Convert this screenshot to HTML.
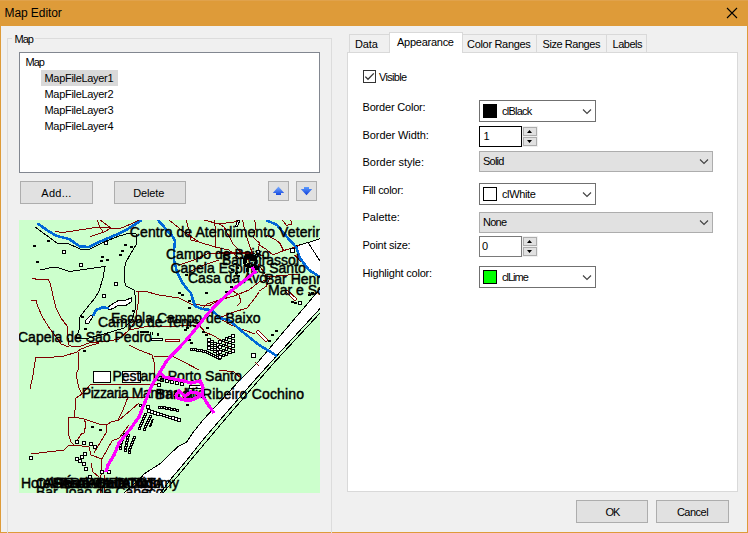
<!DOCTYPE html>
<html><head><meta charset="utf-8"><title>Map Editor</title>
<style>
*{box-sizing:border-box;margin:0;padding:0}
html,body{width:748px;height:533px;overflow:hidden;background:#f0f0f0}
body{position:relative;font-family:"Liberation Sans",sans-serif;font-size:11px;color:#000}
.abs{position:absolute}
#win{position:absolute;left:0;top:0;width:748px;height:533px;background:#f0f0f0;border:1px solid #de9b39;border-top:0}
#title{position:absolute;left:0;top:0;width:748px;height:26px;background:#de9b39}
#title span{position:absolute;left:4.5px;top:6px;font-size:12px;line-height:15px;letter-spacing:-0.08px}
.t{position:absolute;white-space:nowrap;line-height:13px}
.btn{position:absolute;background:#e1e1e1;border:1px solid #adadad;text-align:center;line-height:21px;padding-top:1px}
.grp{position:absolute;border:1px solid #dcdcdc}
.box{position:absolute;background:#fff;border:1px solid #7a7a7a}
.cmb{position:absolute;background:#e1e1e1;border:1px solid #adadad}
.tab{position:absolute;background:#f0f0f0;border:1px solid #d9d9d9;border-bottom:0;text-align:center;line-height:17px;padding-top:1px;white-space:nowrap}
.spin{position:absolute;width:16px;height:21px;background:#f0f0f0}
.spin i{position:absolute;left:1px;width:14px;height:9px;background:#e1e1e1;border:1px solid #adadad}
</style></head><body>
<div id="win"></div>
<div id="title"><div class="abs" style="left:0;top:0;width:748px;height:1px;background:#e0a24c"></div><span>Map Editor</span>
<svg class="abs" style="left:726px;top:7px" width="12" height="12" viewBox="0 0 12 12"><path d="M1 1 L11 11 M11 1 L1 11" stroke="#000" stroke-width="1.1" fill="none"/></svg>
</div>

<!-- left group -->
<div class="grp" style="left:7px;top:38px;width:325px;height:500px"></div>
<div class="t" style="left:12px;top:33px;background:#f0f0f0;padding:0 2px 0 2.5px;letter-spacing:-1px">Map</div>
<div class="box" style="left:19px;top:52px;width:301px;height:121px;border-color:#828790"></div>
<div class="t" style="left:25.5px;top:56px;letter-spacing:-1px">Map</div>
<div class="abs" style="left:41px;top:70px;width:77px;height:16px;background:#d9d9d9"></div>
<div class="t" style="left:44.5px;top:72px;letter-spacing:-.31px">MapFileLayer1</div>
<div class="t" style="left:44.5px;top:88px;letter-spacing:-.31px">MapFileLayer2</div>
<div class="t" style="left:44.5px;top:104px;letter-spacing:-.31px">MapFileLayer3</div>
<div class="t" style="left:44.5px;top:120px;letter-spacing:-.31px">MapFileLayer4</div>
<div class="btn" style="left:20px;top:181px;width:73px;height:23px;letter-spacing:.27px">Add...</div>
<div class="btn" style="left:114px;top:181px;width:72px;height:23px;letter-spacing:-.16px;padding-right:2.5px">Delete</div>
<div class="btn" style="left:268px;top:181px;width:21px;height:20px"></div>
<svg class="abs" style="left:268px;top:181px" width="21" height="20" viewBox="0 0 21 20"><defs><linearGradient id="gu" x1="0" y1="0" x2="0" y2="1"><stop offset="0" stop-color="#7db0ff"/><stop offset="1" stop-color="#1246e0"/></linearGradient></defs><path d="M10.5 5.5 L16.2 12 L13 12 L13 14 L8 14 L8 12 L4.8 12 Z" fill="url(#gu)"/></svg>
<div class="btn" style="left:296px;top:181px;width:21px;height:20px"></div>
<svg class="abs" style="left:296px;top:181px" width="21" height="20" viewBox="0 0 21 20"><defs><linearGradient id="gd" x1="0" y1="0" x2="0" y2="1"><stop offset="0" stop-color="#5c9cff"/><stop offset="1" stop-color="#0c3ad8"/></linearGradient></defs><path d="M8 6 L13 6 L13 8 L16.2 8 L10.5 14.3 L4.8 8 L8 8 Z" fill="url(#gd)"/></svg>
<div id="map" class="abs" style="left:19px;top:220px;width:301px;height:273px;background:#ccffcc;overflow:hidden"><svg id="mapsvg" width="301" height="273" viewBox="0 0 301 273" style="position:absolute;left:0;top:0">
<rect width="301" height="273" fill="#ccffcc"/>
<g shape-rendering="crispEdges">
<polygon points="278,25.7 292,21.7 301,18.7 301,88.6 252,142 235.8,160 201,200 184,219.7 167.3,240.8 151.8,259 143.3,270.3 141,273 105,273 120.8,259 125,254 141.2,243.6 158.8,226.7 168,221.8 172.9,214 184,200 221,160 239,142 294.6,76.4 301,69 301,57 290,50 281,38" fill="#fff" stroke="#000" stroke-width="1"/>
<polyline points="301,93 255.7,142 240,160 205.5,200 172.9,238.7 157.4,257.7 146.2,270.3 144,273" stroke="#000" stroke-width="1" fill="none" />
<polyline points="36,11.5 44,12.5 70,8.5 80,7 92,8 100,9" stroke="#800000" stroke-width="1" fill="none" />
<polyline points="78,0 81,7 84,12" stroke="#800000" stroke-width="1" fill="none" />
<polyline points="81,0 92,8" stroke="#800000" stroke-width="1" fill="none" />
<polyline points="71,16.5 84,12.5 92,8" stroke="#800000" stroke-width="1" fill="none" />
<polyline points="13,58.5 20,59.5 29,59 31,63 33,71 35,80 37,88 42,98 48,106 49,118 50,125 54,127 62,126 70,123 80,122 90,121 100,119 110,110 125,107 160,106 180,105" stroke="#800000" stroke-width="1" fill="none" />
<polyline points="12,80 17,80.5 19,87 24,98 31,109 38,118 42,124 50,127" stroke="#800000" stroke-width="1" fill="none" />
<polyline points="16,142 16,137 30,137.5 45,136 58,132 62,129 70,126 80,123" stroke="#800000" stroke-width="1" fill="none" />
<polyline points="16,142 14,155 11,169" stroke="#800000" stroke-width="1" fill="none" />
<polyline points="59,132 60,147 57,155 60,168 63,174 57,178 56,190 55,197 49,197 49,213 52,222 55,225" stroke="#800000" stroke-width="1" fill="none" />
<polyline points="55,197 65,199 80,204 88,205 92,202 100,200 112,190 120,183" stroke="#800000" stroke-width="1" fill="none" />
<polyline points="63,174 72,164 100,164 140,164" stroke="#800000" stroke-width="1" fill="none" />
<polyline points="65,199 67,204 65,213 63,213 57,222" stroke="#800000" stroke-width="1" fill="none" />
<polyline points="88,205 87,213 75,233" stroke="#800000" stroke-width="1" fill="none" />
<polyline points="12,233 20,233 45,230 50,225 55,225 70,227 72,235 83,239 88,230 93,221 100,218 110,205" stroke="#800000" stroke-width="1" fill="none" />
<polyline points="83,239 82,255 81,273" stroke="#800000" stroke-width="1" fill="none" />
<polyline points="72,243 74,252 80,257" stroke="#800000" stroke-width="1" fill="none" />
<polyline points="85,273 86,255" stroke="#800000" stroke-width="1" fill="none" />
<polyline points="110,125 120,130 133,135 135,142 135,160" stroke="#800000" stroke-width="1" fill="none" />
<polyline points="135,136 155,137 165,142 180,150" stroke="#800000" stroke-width="1" fill="none" />
<polyline points="119,71 120,78 118,90 117,100 110,110" stroke="#800000" stroke-width="1" fill="none" />
<polyline points="99,177 131,177" stroke="#800000" stroke-width="1" fill="none" />
<polyline points="109,177 104,190 99,200" stroke="#800000" stroke-width="1" fill="none" />
<polyline points="200,4 204.7,6.7 206.7,8.8" stroke="#800000" stroke-width="1" fill="none" />
<polyline points="223.6,0 225,6.7 227.7,17.5 231,27 233.8,33.8" stroke="#800000" stroke-width="1" fill="none" />
<polyline points="235.8,0 236.5,8 234.4,17.5 240.5,23 239,31" stroke="#800000" stroke-width="1" fill="none" />
<polyline points="247,15 256.7,20 260.8,23 264.8,31" stroke="#800000" stroke-width="1" fill="none" />
<polyline points="239,24.3 246,28.4 254,35 263.5,31 271.6,28.4 281,25" stroke="#800000" stroke-width="1" fill="none" />
<polyline points="263.5,0 267.5,5.4 273,4 271.5,0" stroke="#800000" stroke-width="1" fill="none" />
<polyline points="200,32.4 217,32.4 234,32.4" stroke="#800000" stroke-width="1" fill="none" />
<polyline points="275.6,35 281,40.5 286.4,44.6" stroke="#800000" stroke-width="1" fill="none" />
<polyline points="247.3,56.7 264.8,55.4 281,54" stroke="#800000" stroke-width="1" fill="none" />
<polyline points="251.3,56.7 247.3,66.2 240.5,71" stroke="#800000" stroke-width="1" fill="none" />
<polyline points="239,44.6 244.6,51.3 247.3,56.7" stroke="#800000" stroke-width="1" fill="none" />
<polyline points="205,8 210,16 214,24 222,32.4" stroke="#800000" stroke-width="1" fill="none" />
<polyline points="100,9 112,4 120,0" stroke="#800000" stroke-width="1" fill="none" />
<polyline points="150,0 165,12 180,22 196,27 210,30 220,38 230,40" stroke="#800000" stroke-width="1" fill="none" />
<polyline points="167,0 170,10 172,20 180,22" stroke="#800000" stroke-width="1" fill="none" />
<polyline points="195,0 197,12 196,27" stroke="#800000" stroke-width="1" fill="none" />
<polyline points="185,0 200,4 215,2 220,0" stroke="#800000" stroke-width="1" fill="none" />
<polyline points="160,45 175,40 190,33 205,33 232,33 245,36" stroke="#800000" stroke-width="1" fill="none" />
<polyline points="170,52 185,45 200,40" stroke="#800000" stroke-width="1" fill="none" />
<polyline points="117,71.5 125,71 140,75 160,78 172,84 190,86" stroke="#800000" stroke-width="1" fill="none" />
<polyline points="190,86 200,80 215,76 230,70 240,62 248,60" stroke="#800000" stroke-width="1" fill="none" />
<polyline points="200,98 215,92 228,88 236,78 240,72" stroke="#800000" stroke-width="1" fill="none" />
<polyline points="214,71 220,75 222,82 218,86" stroke="#800000" stroke-width="1" fill="none" />
<polyline points="200,98 212,105 225,110 236,114" stroke="#800000" stroke-width="1" fill="none" />
<polyline points="180,105 186,112 195,116 205,122 212,130" stroke="#800000" stroke-width="1" fill="none" />
<polyline points="183,89 188,84 200,80" stroke="#800000" stroke-width="1" fill="none" />
<polyline points="200,150 215,152 222,158" stroke="#800000" stroke-width="1" fill="none" />
<polyline points="236,142 240,146" stroke="#800000" stroke-width="1" fill="none" />
<polyline points="16,7 38,23 49,23.5 61,29 71,29 85,22 100,16 111,13 117,14 117,25 112,33 107,42 105,50 105,60 107,66 115,70 116,75" stroke="#000" stroke-width="1" fill="none" />
<polyline points="21,50 35,47 39,47.5 50,51.5 86,46.5 84,58 80,71 76,78 67,89 61,97 60,110 57,118 58,119 70,118 82,115 95,111 105,108 113,100 116,90 116,75" stroke="#000" stroke-width="1" fill="none" />
<rect x="13.5" y="24.5" width="3" height="2" fill="#000"/><rect x="27.5" y="19.5" width="3" height="2" fill="#000"/><rect x="16.5" y="40.5" width="3" height="2" fill="#000"/><rect x="81.5" y="36" width="3" height="2" fill="#000"/><rect x="80.5" y="40" width="3" height="2" fill="#000"/><rect x="86.5" y="38.5" width="3" height="2" fill="#000"/><rect x="104.5" y="24" width="3" height="2" fill="#000"/><rect x="110.5" y="26" width="3" height="2" fill="#000"/><rect x="101.5" y="30" width="3" height="2" fill="#000"/><rect x="99.5" y="34" width="3" height="2" fill="#000"/><rect x="165.5" y="54" width="3" height="2" fill="#000"/><rect x="62" y="95.5" width="3" height="2" fill="#000"/><rect x="64.5" y="107.5" width="3" height="2" fill="#000"/><rect x="64" y="129.5" width="3" height="2" fill="#000"/><rect x="112.5" y="89.5" width="3" height="2" fill="#000"/><rect x="158.5" y="72" width="3" height="2" fill="#000"/><rect x="161.5" y="74" width="3" height="2" fill="#000"/><rect x="168.5" y="80" width="3" height="2" fill="#000"/><rect x="168.5" y="87" width="3" height="2" fill="#000"/><rect x="185.5" y="72" width="3" height="2" fill="#000"/><rect x="248.5" y="120" width="3" height="2" fill="#000"/><rect x="251.5" y="114" width="3" height="2" fill="#000"/><rect x="255.5" y="110" width="3" height="2" fill="#000"/><rect x="271.5" y="81" width="3" height="2" fill="#000"/><rect x="274.5" y="82" width="3" height="2" fill="#000"/><rect x="288.5" y="74" width="3" height="2" fill="#000"/><rect x="291.5" y="72" width="3" height="2" fill="#000"/><rect x="164.5" y="109" width="3" height="2" fill="#000"/><rect x="166.5" y="107" width="3" height="2" fill="#000"/><rect x="182.5" y="111" width="3" height="2" fill="#000"/><rect x="186.5" y="107" width="3" height="2" fill="#000"/><rect x="185.5" y="114" width="3" height="2" fill="#000"/><rect x="168.5" y="119" width="3" height="2" fill="#000"/><rect x="170.5" y="122" width="3" height="2" fill="#000"/><rect x="71.5" y="206" width="3" height="2" fill="#000"/><rect x="79.5" y="209" width="3" height="2" fill="#000"/><rect x="178.5" y="165" width="3" height="2" fill="#000"/><rect x="166.5" y="184" width="3" height="2" fill="#000"/><rect x="43.5" y="30" width="3" height="3" fill="#fff" stroke="#000" stroke-width="1"/><rect x="60" y="43" width="3" height="3" fill="#fff" stroke="#000" stroke-width="1"/><rect x="85.5" y="21" width="3" height="3" fill="#fff" stroke="#000" stroke-width="1"/><rect x="95" y="62" width="3" height="3" fill="#fff" stroke="#000" stroke-width="1"/><rect x="83" y="74.5" width="3" height="3" fill="#fff" stroke="#000" stroke-width="1"/><rect x="279" y="81.5" width="3" height="3" fill="#fff" stroke="#000" stroke-width="1"/><polygon points="66,101 67,104 70,103 74,96 72,95" fill="#fff" stroke="#000" stroke-width="1"/><polygon points="88,88 92,85 100,80 107,80 112,78 112,82 106,86 100,85 95,88 90,90" fill="#fff" stroke="#000" stroke-width="1"/><rect x="121" y="111" width="9" height="2" fill="#000"/><rect x="131" y="112" width="1" height="3" fill="#000"/><rect x="133" y="112" width="1" height="3" fill="#000"/><rect x="138" y="113" width="2" height="3" fill="#000"/><rect x="132" y="118" width="11" height="2" fill="#fff" stroke="#000"/><rect x="146" y="119" width="14" height="2" fill="#fff" stroke="#800000"/><rect x="171" y="128" width="2" height="2" fill="#fff" stroke="#000" stroke-width="1"/><rect x="173" y="128.333" width="2" height="2" fill="#fff" stroke="#000" stroke-width="1"/><rect x="175" y="128.667" width="2" height="2" fill="#fff" stroke="#000" stroke-width="1"/><rect x="177" y="129" width="2" height="2" fill="#fff" stroke="#000" stroke-width="1"/><rect x="179" y="129.333" width="2" height="2" fill="#fff" stroke="#000" stroke-width="1"/><rect x="181" y="129.667" width="2" height="2" fill="#fff" stroke="#000" stroke-width="1"/><rect x="183" y="130" width="2" height="2" fill="#fff" stroke="#000" stroke-width="1"/><rect x="185" y="130" width="2" height="2" fill="#fff" stroke="#000" stroke-width="1"/><rect x="187" y="131" width="2" height="2" fill="#fff" stroke="#000" stroke-width="1"/><rect x="189" y="132" width="2" height="2" fill="#fff" stroke="#000" stroke-width="1"/><rect x="191" y="133" width="2" height="2" fill="#fff" stroke="#000" stroke-width="1"/><rect x="193" y="134" width="2" height="2" fill="#fff" stroke="#000" stroke-width="1"/><rect x="195" y="135" width="2" height="2" fill="#fff" stroke="#000" stroke-width="1"/><rect x="197" y="136" width="2" height="2" fill="#fff" stroke="#000" stroke-width="1"/><rect x="199" y="137" width="2" height="2" fill="#fff" stroke="#000" stroke-width="1"/><rect x="188.75" y="118.75" width="2.5" height="2.5" fill="#fff" stroke="#000" stroke-width="1"/><rect x="191.75" y="120.417" width="2.5" height="2.5" fill="#fff" stroke="#000" stroke-width="1"/><rect x="194.75" y="122.083" width="2.5" height="2.5" fill="#fff" stroke="#000" stroke-width="1"/><rect x="197.75" y="123.75" width="2.5" height="2.5" fill="#fff" stroke="#000" stroke-width="1"/><rect x="188.75" y="122.75" width="2.5" height="2.5" fill="#fff" stroke="#000" stroke-width="1"/><rect x="191.75" y="124.417" width="2.5" height="2.5" fill="#fff" stroke="#000" stroke-width="1"/><rect x="194.75" y="126.083" width="2.5" height="2.5" fill="#fff" stroke="#000" stroke-width="1"/><rect x="197.75" y="127.75" width="2.5" height="2.5" fill="#fff" stroke="#000" stroke-width="1"/><rect x="188.75" y="126.75" width="2.5" height="2.5" fill="#fff" stroke="#000" stroke-width="1"/><rect x="191.75" y="128.417" width="2.5" height="2.5" fill="#fff" stroke="#000" stroke-width="1"/><rect x="194.75" y="130.083" width="2.5" height="2.5" fill="#fff" stroke="#000" stroke-width="1"/><rect x="197.75" y="131.75" width="2.5" height="2.5" fill="#fff" stroke="#000" stroke-width="1"/><rect x="199.75" y="120.75" width="2.5" height="2.5" fill="#fff" stroke="#000" stroke-width="1"/><rect x="203" y="119.25" width="2.5" height="2.5" fill="#fff" stroke="#000" stroke-width="1"/><rect x="206.25" y="117.75" width="2.5" height="2.5" fill="#fff" stroke="#000" stroke-width="1"/><rect x="209.5" y="116.25" width="2.5" height="2.5" fill="#fff" stroke="#000" stroke-width="1"/><rect x="212.75" y="114.75" width="2.5" height="2.5" fill="#fff" stroke="#000" stroke-width="1"/><rect x="199.75" y="125.75" width="2.5" height="2.5" fill="#fff" stroke="#000" stroke-width="1"/><rect x="203" y="124.25" width="2.5" height="2.5" fill="#fff" stroke="#000" stroke-width="1"/><rect x="206.25" y="122.75" width="2.5" height="2.5" fill="#fff" stroke="#000" stroke-width="1"/><rect x="209.5" y="121.25" width="2.5" height="2.5" fill="#fff" stroke="#000" stroke-width="1"/><rect x="212.75" y="119.75" width="2.5" height="2.5" fill="#fff" stroke="#000" stroke-width="1"/><rect x="199.75" y="130.75" width="2.5" height="2.5" fill="#fff" stroke="#000" stroke-width="1"/><rect x="203" y="129.25" width="2.5" height="2.5" fill="#fff" stroke="#000" stroke-width="1"/><rect x="206.25" y="127.75" width="2.5" height="2.5" fill="#fff" stroke="#000" stroke-width="1"/><rect x="209.5" y="126.25" width="2.5" height="2.5" fill="#fff" stroke="#000" stroke-width="1"/><rect x="212.75" y="124.75" width="2.5" height="2.5" fill="#fff" stroke="#000" stroke-width="1"/><rect x="199.75" y="135.75" width="2.5" height="2.5" fill="#fff" stroke="#000" stroke-width="1"/><rect x="203" y="134.25" width="2.5" height="2.5" fill="#fff" stroke="#000" stroke-width="1"/><rect x="206.25" y="132.75" width="2.5" height="2.5" fill="#fff" stroke="#000" stroke-width="1"/><rect x="209.5" y="131.25" width="2.5" height="2.5" fill="#fff" stroke="#000" stroke-width="1"/><rect x="212.75" y="129.75" width="2.5" height="2.5" fill="#fff" stroke="#000" stroke-width="1"/><rect x="232" y="133" width="4" height="4" fill="#fff" stroke="#000" stroke-width="1"/><polygon points="237,112 239,110 249,120 247,122" fill="#fff" stroke="#800000" stroke-width="1"/><polygon points="266,71 268,70 278,79 276,81" fill="#fff" stroke="#800000" stroke-width="1"/><rect x="138" y="163" width="3" height="3" fill="#fff" stroke="#000" stroke-width="1"/><rect x="138" y="169" width="3" height="3" fill="#fff" stroke="#000" stroke-width="1"/><rect x="141.5" y="158.5" width="3" height="3" fill="#fff" stroke="#000" stroke-width="1"/><rect x="146.5" y="159.5" width="3" height="3" fill="#fff" stroke="#000" stroke-width="1"/><rect x="151.5" y="160.5" width="3" height="3" fill="#fff" stroke="#000" stroke-width="1"/><rect x="156.5" y="161.5" width="3" height="3" fill="#fff" stroke="#000" stroke-width="1"/><rect x="161.5" y="162.5" width="3" height="3" fill="#fff" stroke="#000" stroke-width="1"/><rect x="170" y="165" width="12" height="3" fill="#fff" stroke="#000"/><rect x="139" y="186" width="2" height="2" fill="#fff" stroke="#000" stroke-width="1"/><rect x="141.571" y="186.429" width="2" height="2" fill="#fff" stroke="#000" stroke-width="1"/><rect x="144.143" y="186.857" width="2" height="2" fill="#fff" stroke="#000" stroke-width="1"/><rect x="146.714" y="187.286" width="2" height="2" fill="#fff" stroke="#000" stroke-width="1"/><rect x="149.286" y="187.714" width="2" height="2" fill="#fff" stroke="#000" stroke-width="1"/><rect x="151.857" y="188.143" width="2" height="2" fill="#fff" stroke="#000" stroke-width="1"/><rect x="154.429" y="188.571" width="2" height="2" fill="#fff" stroke="#000" stroke-width="1"/><rect x="157" y="189" width="2" height="2" fill="#fff" stroke="#000" stroke-width="1"/><rect x="131.75" y="190.75" width="2.5" height="2.5" fill="#fff" stroke="#000" stroke-width="1"/><rect x="134.75" y="191.639" width="2.5" height="2.5" fill="#fff" stroke="#000" stroke-width="1"/><rect x="137.75" y="192.528" width="2.5" height="2.5" fill="#fff" stroke="#000" stroke-width="1"/><rect x="140.75" y="193.417" width="2.5" height="2.5" fill="#fff" stroke="#000" stroke-width="1"/><rect x="143.75" y="194.306" width="2.5" height="2.5" fill="#fff" stroke="#000" stroke-width="1"/><rect x="146.75" y="195.194" width="2.5" height="2.5" fill="#fff" stroke="#000" stroke-width="1"/><rect x="149.75" y="196.083" width="2.5" height="2.5" fill="#fff" stroke="#000" stroke-width="1"/><rect x="152.75" y="196.972" width="2.5" height="2.5" fill="#fff" stroke="#000" stroke-width="1"/><rect x="155.75" y="197.861" width="2.5" height="2.5" fill="#fff" stroke="#000" stroke-width="1"/><rect x="158.75" y="198.75" width="2.5" height="2.5" fill="#fff" stroke="#000" stroke-width="1"/><rect x="120" y="184" width="2" height="2" fill="#fff" stroke="#000" stroke-width="1"/><rect x="127" y="185" width="3" height="3" fill="#fff" stroke="#000" stroke-width="1"/><rect x="128" y="189" width="3" height="3" fill="#fff" stroke="#000" stroke-width="1"/><rect x="125" y="193" width="2" height="2" fill="#fff" stroke="#000" stroke-width="1"/><rect x="124" y="195.333" width="2" height="2" fill="#fff" stroke="#000" stroke-width="1"/><rect x="123" y="197.667" width="2" height="2" fill="#fff" stroke="#000" stroke-width="1"/><rect x="122" y="200" width="2" height="2" fill="#fff" stroke="#000" stroke-width="1"/><rect x="121" y="202.333" width="2" height="2" fill="#fff" stroke="#000" stroke-width="1"/><rect x="120" y="204.667" width="2" height="2" fill="#fff" stroke="#000" stroke-width="1"/><rect x="119" y="207" width="2" height="2" fill="#fff" stroke="#000" stroke-width="1"/><rect x="130" y="195" width="2" height="2" fill="#fff" stroke="#000" stroke-width="1"/><rect x="129" y="197.167" width="2" height="2" fill="#fff" stroke="#000" stroke-width="1"/><rect x="128" y="199.333" width="2" height="2" fill="#fff" stroke="#000" stroke-width="1"/><rect x="127" y="201.5" width="2" height="2" fill="#fff" stroke="#000" stroke-width="1"/><rect x="126" y="203.667" width="2" height="2" fill="#fff" stroke="#000" stroke-width="1"/><rect x="125" y="205.833" width="2" height="2" fill="#fff" stroke="#000" stroke-width="1"/><rect x="124" y="208" width="2" height="2" fill="#fff" stroke="#000" stroke-width="1"/><line x1="134" y1="199" x2="131" y2="207" stroke="#000" stroke-width="2"/><rect x="108" y="214" width="2" height="2" fill="#fff" stroke="#000" stroke-width="1"/><rect x="107.5" y="216.5" width="2" height="2" fill="#fff" stroke="#000" stroke-width="1"/><rect x="107" y="219" width="2" height="2" fill="#fff" stroke="#000" stroke-width="1"/><rect x="106.5" y="221.5" width="2" height="2" fill="#fff" stroke="#000" stroke-width="1"/><rect x="106" y="224" width="2" height="2" fill="#fff" stroke="#000" stroke-width="1"/><rect x="105.5" y="226.5" width="2" height="2" fill="#fff" stroke="#000" stroke-width="1"/><rect x="105" y="229" width="2" height="2" fill="#fff" stroke="#000" stroke-width="1"/><rect x="114" y="216" width="2" height="2" fill="#fff" stroke="#000" stroke-width="1"/><rect x="113.167" y="218.5" width="2" height="2" fill="#fff" stroke="#000" stroke-width="1"/><rect x="112.333" y="221" width="2" height="2" fill="#fff" stroke="#000" stroke-width="1"/><rect x="111.5" y="223.5" width="2" height="2" fill="#fff" stroke="#000" stroke-width="1"/><rect x="110.667" y="226" width="2" height="2" fill="#fff" stroke="#000" stroke-width="1"/><rect x="109.833" y="228.5" width="2" height="2" fill="#fff" stroke="#000" stroke-width="1"/><rect x="109" y="231" width="2" height="2" fill="#fff" stroke="#000" stroke-width="1"/><rect x="104" y="213" width="2" height="2" fill="#fff" stroke="#000" stroke-width="1"/><rect x="103.2" y="215.8" width="2" height="2" fill="#fff" stroke="#000" stroke-width="1"/><rect x="102.4" y="218.6" width="2" height="2" fill="#fff" stroke="#000" stroke-width="1"/><rect x="101.6" y="221.4" width="2" height="2" fill="#fff" stroke="#000" stroke-width="1"/><rect x="100.8" y="224.2" width="2" height="2" fill="#fff" stroke="#000" stroke-width="1"/><rect x="100" y="227" width="2" height="2" fill="#fff" stroke="#000" stroke-width="1"/><rect x="10" y="236" width="3" height="3" fill="#fff" stroke="#000" stroke-width="1"/><rect x="56" y="220" width="3" height="3" fill="#fff" stroke="#000" stroke-width="1"/><rect x="63" y="221" width="3" height="3" fill="#fff" stroke="#000" stroke-width="1"/><rect x="70" y="222" width="3" height="3" fill="#fff" stroke="#000" stroke-width="1"/><rect x="74" y="225" width="3" height="3" fill="#fff" stroke="#000" stroke-width="1"/><rect x="56" y="237" width="3" height="3" fill="#fff" stroke="#000" stroke-width="1"/><rect x="59" y="239" width="3" height="3" fill="#fff" stroke="#000" stroke-width="1"/><rect x="61" y="235" width="3" height="3" fill="#fff" stroke="#000" stroke-width="1"/><rect x="63" y="242" width="3" height="3" fill="#fff" stroke="#000" stroke-width="1"/><rect x="65" y="247" width="3" height="3" fill="#fff" stroke="#000" stroke-width="1"/><rect x="81" y="250" width="3" height="3" fill="#fff" stroke="#000" stroke-width="1"/><rect x="88" y="250" width="3" height="3" fill="#fff" stroke="#000" stroke-width="1"/><rect x="69" y="255" width="3" height="3" fill="#fff" stroke="#000" stroke-width="1"/><rect x="64" y="232" width="3" height="3" fill="#fff" stroke="#000" stroke-width="1"/><rect x="237.5" y="30" width="3" height="3" fill="#fff" stroke="#000" stroke-width="1"/><rect x="227.305" y="34.7538" width="2.5" height="2.5" fill="#fff" stroke="#000" stroke-width="1"/><rect x="229.545" y="35.6345" width="2.5" height="2.5" fill="#000" stroke="#000" stroke-width="1"/><rect x="224.931" y="39.827" width="2.5" height="2.5" fill="#000" stroke="#000" stroke-width="1"/><rect x="236.851" y="46.6077" width="2.5" height="2.5" fill="#fff" stroke="#000" stroke-width="1"/><rect x="234.712" y="36.7728" width="2.5" height="2.5" fill="#000" stroke="#000" stroke-width="1"/><rect x="231.514" y="37.7036" width="2.5" height="2.5" fill="#000" stroke="#000" stroke-width="1"/><rect x="226.417" y="34.8051" width="2.5" height="2.5" fill="#fff" stroke="#000" stroke-width="1"/><rect x="227.002" y="48.7671" width="2.5" height="2.5" fill="#000" stroke="#000" stroke-width="1"/><rect x="235.605" y="46.7131" width="2.5" height="2.5" fill="#000" stroke="#000" stroke-width="1"/><rect x="235.206" y="36.2884" width="2.5" height="2.5" fill="#fff" stroke="#000" stroke-width="1"/><rect x="228.338" y="43.6586" width="2.5" height="2.5" fill="#000" stroke="#000" stroke-width="1"/><rect x="234.247" y="47.529" width="2.5" height="2.5" fill="#000" stroke="#000" stroke-width="1"/><rect x="236.321" y="34.4742" width="2.5" height="2.5" fill="#fff" stroke="#000" stroke-width="1"/><rect x="232.482" y="44.4189" width="2.5" height="2.5" fill="#000" stroke="#000" stroke-width="1"/><rect x="231.083" y="36.0224" width="2.5" height="2.5" fill="#000" stroke="#000" stroke-width="1"/><rect x="230.63" y="34.5189" width="2.5" height="2.5" fill="#fff" stroke="#000" stroke-width="1"/><circle cx="231" cy="41" r="6" fill="none" stroke="#000" stroke-width="2.5"/><rect x="214.5" y="43" width="3" height="2" fill="#000"/><rect x="216.5" y="47" width="3" height="2" fill="#000"/><rect x="215.5" y="52" width="3" height="2" fill="#000"/><rect x="217.5" y="55" width="3" height="2" fill="#000"/><rect x="212.5" y="59" width="3" height="2" fill="#000"/><rect x="210.5" y="66" width="3" height="2" fill="#000"/><rect x="205.5" y="71" width="3" height="2" fill="#000"/><rect x="211.5" y="49" width="3" height="2" fill="#000"/><rect x="74.5" y="151.5" width="17" height="11" fill="#fff" stroke="#000"/><rect x="103.5" y="151.5" width="18" height="11" fill="#fff" stroke="#000"/><rect x="271.5" y="28.5" width="4" height="4" fill="#fff" stroke="#000" stroke-width="1"/><polyline points="289,22.5 301,41" stroke="#000" fill="none"/><polygon points="219,0 221,0 218.5,6.5 216.5,6" fill="#fff" stroke="#000" stroke-width="1"/>
<polyline points="18.5,3.5 30,11.5 38,16 50,19 61,26.5 70,27 80,22 92,17 100,13.5 108,9.5 118,3 123,0" stroke="#0068d8" stroke-width="2.6" fill="none" />
<polyline points="139,0 146,8 154,17 156,21 155,30 155,40 158,52 163,62 168,69 172,73 174,80 176,86 183,89 192,90 197,94 200,98 210,100 225,113 240,125 250,131 258,136" stroke="#0068d8" stroke-width="2.6" fill="none" />
<polyline points="247,0 258,5 268,17 277,27 281,38 290,50 301,57" stroke="#0068d8" stroke-width="2.6" fill="none" />
<polyline points="74,96 77,90 83,87.5 90,88" stroke="#0068d8" stroke-width="2.6" fill="none" />
</g>
<g font-family="'Liberation Sans',sans-serif" font-size="14" fill="#000" stroke="#000" stroke-width="0.45">
<text x="110.8" y="17.1" letter-spacing="0.1">Centro de Atendimento Veterinário</text>
<text x="147" y="39.3">Campo de Baixo</text>
<text x="203" y="45.1">Bar Girassol</text>
<text x="151.4" y="52.8">Capela Espirito Santo</text>
<text x="169" y="63.4">Casa da Avó</text>
<text x="246" y="64.3">Bar Henrique</text>
<text x="249" y="74.8">Mar e Sol</text>
<text x="92" y="103.1">Escola Campo de Baixo</text>
<text x="79" y="107">Campo de Tenis</text>
<text x="-1" y="122.3">Capela de São Pedro</text>
<text x="93.5" y="160.8">Pestana Porto Santo</text>
<text x="62.7" y="177.8" letter-spacing="-0.4">Pizzaria Mamma Mia</text>
<text x="285.3" y="179" text-anchor="end" letter-spacing="0.18">Bar do Ribeiro Cochino</text>
<text x="2" y="267.5" text-anchor="start">Hotel Torre Praia</text>
<text x="17" y="267.5" text-anchor="start">CAFÉ APOLO 14</text>
<text x="24" y="267.5" text-anchor="start">APARTAMENTOS</text>
<text x="98" y="267.5" text-anchor="start">PONTA</text>
<text x="34" y="267.5" text-anchor="start">Snack-Bar Amigo</text>
<text x="160" y="267.5" text-anchor="end">Restaurante Tommy</text>
<text x="17" y="276.5" text-anchor="start">Bar João de Cabeço</text>
</g><g shape-rendering="crispEdges">
<polyline points="233,47 236,52 226,60 212,71 200,82 195,87 187,96 180,105 170,117 160,128 151,137 147,142 141,152 133,165 126,182 120,197 112,208 108,213 100,223 95,235 89,245 87,252" stroke="#ff00ff" stroke-width="3.2" fill="none" stroke-linejoin="round"/>
<polyline points="141,152 145,157 165,161 172,163 181,161 184,167 183,175 188,183 195,193" stroke="#ff00ff" stroke-width="3.2" fill="none" stroke-linejoin="round"/>
<polyline points="183,175 178,173 172,172 166,176 160,171 157,175 158,178 166,180 173,180 179,177 183,175" stroke="#ff00ff" stroke-width="3.2" fill="none" stroke-linejoin="round"/>
</g></svg></div>

<!-- right tabs -->
<div class="abs" style="left:347px;top:52px;width:391px;height:440px;background:#fff;border:1px solid #d9d9d9"></div>
<div class="tab" style="left:349px;top:34px;width:41px;height:18px;letter-spacing:-.11px;text-align:left;padding-left:5px">Data</div>
<div class="tab" style="left:462px;top:34px;width:75px;height:18px;letter-spacing:-.31px;text-align:left;padding-left:4px">Color Ranges</div>
<div class="tab" style="left:536px;top:34px;width:71px;height:18px;letter-spacing:-.44px;text-align:left;padding-left:5.5px">Size Ranges</div>
<div class="tab" style="left:606px;top:34px;width:41px;height:18px;letter-spacing:-.48px;text-align:left;padding-left:5.5px">Labels</div>
<div class="tab" style="left:389px;top:32px;width:74px;height:21px;background:#fff;line-height:18px;padding-top:0;letter-spacing:-.26px;text-align:left;padding-left:7px">Appearance</div>

<div class="abs" style="left:363px;top:70px;width:13px;height:13px;background:#fff;border:1px solid #333"></div>
<svg class="abs" style="left:363px;top:70px" width="13" height="13" viewBox="0 0 13 13"><path d="M2.3 6.6 L5 9.3 L10.8 3.4" stroke="#333" stroke-width="1.3" fill="none"/></svg>
<div class="t" style="left:379px;top:71px;letter-spacing:-.7px">Visible</div>

<div class="t" style="left:362.5px;top:101px;letter-spacing:-.19px">Border Color:</div>
<div class="t" style="left:362.5px;top:129px;letter-spacing:-.08px">Border Width:</div>
<div class="t" style="left:362.5px;top:156px;letter-spacing:-.02px">Border style:</div>
<div class="t" style="left:362.5px;top:184px;letter-spacing:-.29px">Fill color:</div>
<div class="t" style="left:362.5px;top:211px">Palette:</div>
<div class="t" style="left:362.5px;top:239px;letter-spacing:-.27px">Point size:</div>
<div class="t" style="left:362.5px;top:267px;letter-spacing:-.21px">Highlight color:</div>

<div class="box" style="left:479px;top:100px;width:117px;height:22px;border-color:#707070"></div>
<div class="abs" style="left:483px;top:104px;width:14px;height:14px;background:#000;border:1px solid #000"></div>
<div class="t" style="left:502px;top:105px;letter-spacing:-.77px">clBlack</div>
<svg class="abs" style="left:581px;top:106px" width="12" height="10" viewBox="0 0 12 10"><path d="M2 3.5 L6 7.5 L10 3.5" stroke="#404040" stroke-width="1.1" fill="none"/></svg>

<div class="box" style="left:479px;top:126px;width:43px;height:21px;border-color:#000"></div>
<div class="t" style="left:483.5px;top:130px">1</div>
<div class="spin" style="left:522px;top:126px"><i style="top:1px"></i><i style="top:11px"></i>
<svg class="abs" style="left:0;top:0" width="16" height="21" viewBox="0 0 16 21"><path d="M5 7 L7.5 4 L10 7 Z M5 14 L10 14 L7.5 17 Z" fill="#000"/></svg></div>

<div class="cmb" style="left:479px;top:151px;width:234px;height:21px"></div>
<div class="t" style="left:483px;top:155px;letter-spacing:-.76px">Solid</div>
<svg class="abs" style="left:698px;top:156px" width="12" height="10" viewBox="0 0 12 10"><path d="M2 3.5 L6 7.5 L10 3.5" stroke="#404040" stroke-width="1.1" fill="none"/></svg>

<div class="box" style="left:479px;top:183px;width:117px;height:22px;border-color:#707070"></div>
<div class="abs" style="left:483px;top:187px;width:14px;height:14px;background:#fff;border:1px solid #000"></div>
<div class="t" style="left:502px;top:188px;letter-spacing:-.38px">clWhite</div>
<svg class="abs" style="left:581px;top:189px" width="12" height="10" viewBox="0 0 12 10"><path d="M2 3.5 L6 7.5 L10 3.5" stroke="#404040" stroke-width="1.1" fill="none"/></svg>

<div class="cmb" style="left:479px;top:212px;width:234px;height:21px"></div>
<div class="t" style="left:483px;top:216px;letter-spacing:-.73px">None</div>
<svg class="abs" style="left:698px;top:217px" width="12" height="10" viewBox="0 0 12 10"><path d="M2 3.5 L6 7.5 L10 3.5" stroke="#404040" stroke-width="1.1" fill="none"/></svg>

<div class="box" style="left:479px;top:236px;width:43px;height:21px"></div>
<div class="t" style="left:482px;top:240px">0</div>
<div class="spin" style="left:522px;top:236px"><i style="top:1px"></i><i style="top:11px"></i>
<svg class="abs" style="left:0;top:0" width="16" height="21" viewBox="0 0 16 21"><path d="M5 7 L7.5 4 L10 7 Z M5 14 L10 14 L7.5 17 Z" fill="#000"/></svg></div>

<div class="box" style="left:479px;top:266px;width:117px;height:22px;border-color:#707070"></div>
<div class="abs" style="left:483px;top:270px;width:14px;height:14px;background:#00ff00;border:1px solid #000"></div>
<div class="t" style="left:502px;top:271px;letter-spacing:-1px">clLime</div>
<svg class="abs" style="left:581px;top:272px" width="12" height="10" viewBox="0 0 12 10"><path d="M2 3.5 L6 7.5 L10 3.5" stroke="#404040" stroke-width="1.1" fill="none"/></svg>

<div class="btn" style="left:576px;top:500px;width:72px;height:23px;letter-spacing:-1px;padding-left:1px">OK</div>
<div class="btn" style="left:656px;top:500px;width:73px;height:23px;letter-spacing:-.51px">Cancel</div>
</body></html>
